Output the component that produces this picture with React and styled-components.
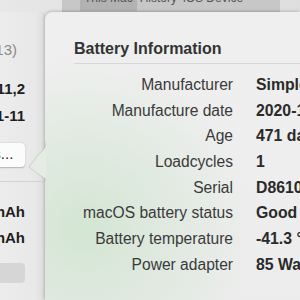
import { Fragment } from "react";
import styled, { createGlobalStyle } from "styled-components";

const Global = createGlobalStyle`
  html, body { margin: 0; padding: 0; }
  body {
    width: 300px;
    height: 300px;
    overflow: hidden;
    background: #e6e6e6;
    font-family: "Liberation Sans", Arial, sans-serif;
  }
`;

const Screen = styled.div`
  width: 300px;
  height: 300px;
  display: flex;
  flex-direction: column;
  background: #e9e9e9;
  overflow: hidden;
`;

const TopBar = styled.div`
  height: 12px;
  flex-shrink: 0;
  display: flex;
  background: linear-gradient(90deg, #e8e8e8 0%, #e4e4e4 20%, #dedede 100%);
`;

const Segmented = styled.div`
  margin-left: 62px;
  width: 200px;
  height: 11px;
  display: flex;
  background: #c7c7c7;
  overflow: hidden;
  padding-left: 18px;
  box-shadow: 0 1px 0 #bdbdbd;
`;

const Segment = styled.div`
  height: 11px;
  padding: 0 ${(p) => (p.$active ? "4px" : "3px")};
  background: ${(p) => (p.$active ? "#b2b2b2" : "transparent")};
  color: #555;
  font-size: 12px;
  line-height: 12px;
  white-space: nowrap;
  & > span {
    display: block;
    margin-top: -8px;
  }
`;

const Body = styled.div`
  flex: 1;
  display: flex;
`;

const LeftPanel = styled.div`
  width: 45px;
  flex-shrink: 0;
  display: flex;
  flex-direction: column;
  align-items: flex-end;
  padding-right: 20px;
  box-sizing: border-box;
  background: linear-gradient(90deg, #ececec 0%, #e8e8e8 80%, #dcdcdc 100%);
  overflow: hidden;
`;

const LeftText = styled.div`
  font-size: 15px;
  line-height: 18px;
  white-space: nowrap;
  font-weight: ${(p) => (p.$bold ? 700 : 400)};
  color: ${(p) => (p.$bold ? "#1e1e1e" : "#8a8a8a")};
  margin-top: ${(p) => p.$top}px;
  margin-right: ${(p) => p.$right || 0}px;
`;

const LeftButton = styled.div`
  margin-top: ${(p) => p.$top}px;
  width: 70px;
  height: ${(p) => p.$h}px;
  flex-shrink: 0;
  background: ${(p) => (p.$gray ? "#d6d6d6" : "#fbfbfb")};
  border-radius: 0 4px 4px 0;
  box-shadow: ${(p) => (p.$gray ? "none" : "0 0.5px 1.5px rgba(0,0,0,0.25)")};
  font-size: 15px;
  color: #222;
  text-align: right;
  padding-right: 17px;
  box-sizing: border-box;
  line-height: 22px;
  white-space: nowrap;
`;

const Divider = styled.div`
  margin-top: ${(p) => p.$top}px;
  width: 45px;
  margin-right: -20px;
  height: 1px;
  flex-shrink: 0;
  background: #d2d2d2;
`;

const Popover = styled.div`
  position: relative;
  flex: 1;
  border-top-left-radius: 8px;
  background:
    radial-gradient(ellipse 170px 170px at 40px 215px, rgba(205, 228, 205, 0.8), rgba(220, 232, 220, 0) 100%),
    linear-gradient(180deg, #efefef 0%, #eeeeee 60%, #ececec 100%);
  box-shadow: -1px -1px 3px rgba(0, 0, 0, 0.18);
  padding: 27px 0 0 29px;
  box-sizing: border-box;
`;

const Arrow = styled.svg`
  position: absolute;
  left: -17px;
  top: 129px;
`;

const Title = styled.div`
  font-size: 16px;
  font-weight: 700;
  line-height: 20px;
  color: #333;
  white-space: nowrap;
`;

const Rule = styled.div`
  height: 1px;
  background: #d6d6d6;
  margin-top: 4px;
  margin-bottom: 8px;
`;

const Grid = styled.div`
  display: grid;
  grid-template-columns: 159px auto;
  column-gap: 23px;
  grid-auto-rows: 25.7px;
  align-items: center;
`;

const Label = styled.div`
  text-align: right;
  font-size: 15.6px;
  color: #3a3a3a;
  white-space: nowrap;
`;

const Value = styled.div`
  font-size: 15.8px;
  font-weight: 700;
  color: #2a2a2a;
  white-space: nowrap;
  overflow: hidden;
`;

const rows = [
  ["Manufacturer", "SimplePower"],
  ["Manufacture date", "2020-11-11"],
  ["Age", "471 days"],
  ["Loadcycles", "1"],
  ["Serial", "D86103"],
  ["macOS battery status", "Good"],
  ["Battery temperature", "-41.3 °C"],
  ["Power adapter", "85 Watt"],
];

export default function App() {
  return (
    <>
      <Global />
      <Screen>
        <TopBar>
          <Segmented>
            <Segment $active><span>This Mac</span></Segment>
            <Segment><span>History</span></Segment>
            <Segment><span>iOS Device</span></Segment>
          </Segmented>
        </TopBar>
        <Body>
          <LeftPanel>
            <LeftText $top={29} $right={8}>(2013)</LeftText>
            <LeftText $bold $top={21}>MacBookPro11,2</LeftText>
            <LeftText $bold $top={9}>2020-11-11</LeftText>
            <LeftButton $top={18} $h={24}>Details...</LeftButton>
            <Divider $top={14} />
            <LeftText $bold $top={21}>8440 mAh</LeftText>
            <LeftText $bold $top={8}>8755 mAh</LeftText>
            <LeftButton $gray $top={16} $h={20} />
          </LeftPanel>
          <Popover>
            <Arrow width="18" height="40" viewBox="0 0 18 40">
              <path
                d="M18 0 C18 8 14 10 10 14 L1 26 L10 33 C14 36 18 37 18 40 Z"
                fill="#e5ece4"
              />
              <path
                d="M18 0 C18 8 14 10 10 14 L1 26 L10 33 C14 36 18 37 18 40"
                fill="none"
                stroke="rgba(0,0,0,0.12)"
                strokeWidth="1"
              />
            </Arrow>
            <Title>Battery Information</Title>
            <Rule />
            <Grid>
              {rows.map(([label, value]) => (
                <Fragment key={label}>
                  <Label>{label}</Label>
                  <Value>{value}</Value>
                </Fragment>
              ))}
            </Grid>
          </Popover>
        </Body>
      </Screen>
    </>
  );
}
